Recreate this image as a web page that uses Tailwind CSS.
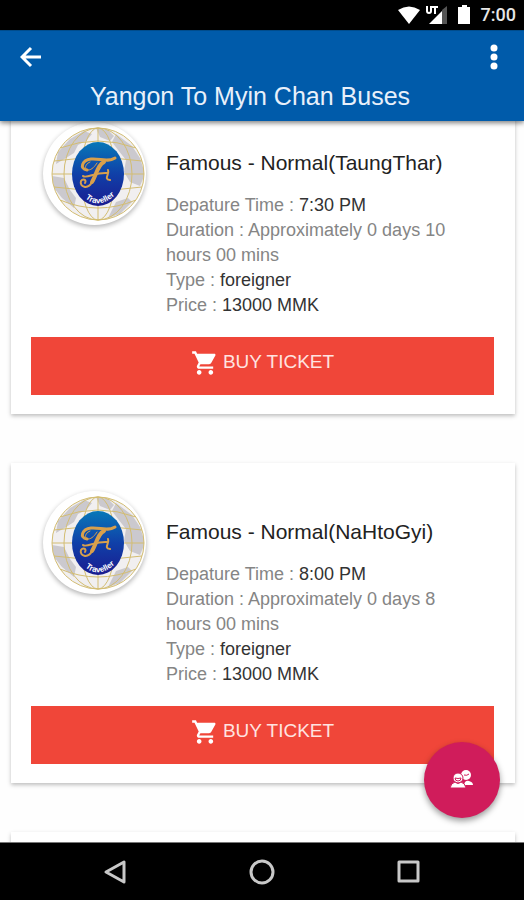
<!DOCTYPE html>
<html lang="en">
<head>
    <meta charset="UTF-8">
    <meta name="viewport" content="width=device-width, initial-scale=1.0">
    <script src="https://cdn.jsdelivr.net/npm/@tailwindcss/browser@4"></script>
    <title>Yangon To Myin Chan Buses</title>
</head>
<body class="flex flex-col h-screen overflow-hidden bg-white font-['Liberation_Sans',sans-serif]">

    <!-- Shared drawings -->
    <svg class="absolute w-0 h-0" aria-hidden="true">
        <defs>
            <linearGradient id="oval" x1="0" y1="0" x2="0" y2="1">
                <stop offset="0" stop-color="#0878b8" />
                <stop offset="0.5" stop-color="#1040a8" />
                <stop offset="1" stop-color="#1a1c90" />
            </linearGradient>
            <path id="arc" d="M31 68Q48 88 69 65" />
            <clipPath id="globe"><circle cx="48" cy="48" r="46" /></clipPath>
            <symbol id="logo" viewBox="0 0 96 96">
                <circle cx="48" cy="48" r="46" fill="#f1eff0" />
                <g clip-path="url(#globe)" fill="#cbc9ce">
                    <path d="M8 26L20 13L34 5L42 8L36 15L28 19L24 27L16 32L6 38Z" />
                    <path d="M46 2L58 4L64 10L60 15L50 11Z" />
                    <path d="M66 8L82 20L90 32L95 48L90 60L80 56L74 46L76 34L68 24L62 16Z" />
                    <path d="M2 50L14 52L20 64L26 72L24 82L12 72L4 62Z" />
                    <path d="M66 76L78 72L82 76L70 88L58 92Z" />
                </g>
                <g fill="none" stroke="#d3bd72" stroke-width="1">
                    <circle cx="48" cy="48" r="46" />
                    <ellipse cx="48" cy="48" rx="34" ry="46" />
                    <ellipse cx="48" cy="48" rx="17" ry="46" />
                    <path d="M48 2V94M2 48H94M10 22Q48 8 86 22M10 74Q48 90 86 74M4 35Q48 29 92 35M4 61Q48 67 92 61" />
                </g>
                <ellipse cx="48" cy="48" rx="26" ry="32" fill="url(#oval)" />
                <g fill="none" stroke="#d9a04c" stroke-linecap="round">
                    <path stroke-width="3" d="M37 44C29 43 32 34 41 33C50 32 57 37 65 32" />
                    <path stroke-width="4" d="M54 36C48 38 46 50 42 56" />
                    <path stroke-width="2" d="M42 56C38 64 29 61 31 55C33 52 37 54 35 57" />
                    <path stroke-width="2" d="M33 50C36 53 46 46 57 47M58 44C60 48 53 53 60 54" />
                    <path stroke-width="1" d="M40 36C35 38 34 43 38 44C42 44 45 40 47 37" />
                </g>
                <text class="font-['Liberation_Sans',sans-serif]" font-size="8" font-weight="bold" fill="#ffffff"><textPath href="#arc" startOffset="50%" text-anchor="middle">Traveller</textPath></text>
            </symbol>
            <symbol id="cart" viewBox="0 0 24 24">
                <path fill="currentColor" d="M7 18c-1.100 0-1.990.9-1.990 2S5.900 22 7 22s2-.9 2-2-.9-2-2-2zM1 2v2h2l3.600 7.590-1.350 2.450c-.16.280-.25.610-.25.960 0 1.100.9 2 2 2h12v-2H7.420c-.14 0-.25-.11-.25-.25l.03-.12.900-1.630h7.450c.75 0 1.410-.41 1.750-1.030l3.580-6.490c.08-.14.120-.31.120-.48 0-.55-.45-1-1-1H5.210l-.94-2H1zm16 16c-1.100 0-1.990.9-1.990 2s.89 2 1.990 2 2-.9 2-2-.9-2-2-2z" />
            </symbol>
        </defs>
    </svg>

    <!-- Status bar -->
    <div class="flex shrink-0 items-center justify-end h-[30px] px-2 bg-black text-white">
        <svg class="w-6 h-5" viewBox="0 0 24 20"><path fill="currentColor" d="M1 5Q12 -2 23 5L12 19Z" /></svg>
        <svg class="w-6 h-5 ml-1" viewBox="0 0 24 20">
            <path fill="#555555" d="M17 5L22 1V19H17Z" />
            <path fill="currentColor" d="M4 19L17 6V19Z" />
            <path fill="none" stroke="currentColor" stroke-width="2" d="M2 1V6Q2 8 4 8Q6 8 6 6V1M7 2H13M10 1V9" />
        </svg>
        <svg class="w-4 h-5 ml-2" viewBox="0 0 16 20"><path fill="currentColor" d="M5 0H10V2H13V19H1V2H5Z" /></svg>
        <span class="ml-2 font-['Roboto',sans-serif] text-[18px] leading-[30px] font-medium text-[#e6e6e6]">7:00</span>
    </div>

    <!-- Toolbar -->
    <header class="relative z-10 shrink-0 h-[91px] bg-[#005baa] text-white border-t border-[#004c8c] shadow-[0_2px_5px_rgba(0,0,0,0.5)]">
        <div class="flex items-center justify-between h-[52px] pl-5 pr-[22px]">
            <button type="button" aria-label="Back">
                <svg class="w-[22px] h-[22px]" viewBox="0 0 22 22" fill="none" stroke="currentColor" stroke-width="3"><path d="M21 11H3M11 2L2 11L11 20" /></svg>
            </button>
            <button type="button" aria-label="More options">
                <svg class="w-4 h-7" viewBox="0 0 16 28" fill="currentColor"><circle cx="8" cy="5" r="3.500" /><circle cx="8" cy="14" r="3.500" /><circle cx="8" cy="23" r="3.500" /></svg>
            </button>
        </div>
        <h1 class="pr-6 text-center text-[25px] leading-[26px] text-[#e8f0fa]">Yangon To Myin Chan Buses</h1>
    </header>

    <!-- Bus list -->
    <main class="relative flex-1 min-h-0 bg-[#fefefe]">
        <ul class="flex flex-col gap-[49px] h-full overflow-hidden pl-[11px] pr-[9px]">
            <li class="-mt-[27px] shrink-0 bg-white pl-5 pr-[21px] pt-[28px] pb-[19px] shadow-[0_2px_4px_rgba(0,0,0,0.25)]">
                <div class="flex gap-5 pl-3">
                    <div class="flex shrink-0 items-center justify-end size-[103px] rounded-full bg-white shadow-[0_2px_5px_rgba(0,0,0,0.3)]">
                        <svg class="size-24" role="img" aria-label="Famous Traveller"><use href="#logo" /></svg>
                    </div>
                    <div class="flex-1 pt-[27px] pr-5">
                        <h2 class="text-[21px] leading-[28px] text-[#222222]">Famous - Normal(TaungThar)</h2>
                        <div class="mt-4 text-[18px] leading-[25px] text-[#858585]">
                            <p>Depature Time : <span class="text-[#333333]">7:30 PM</span></p>
                            <p>Duration : Approximately 0 days 10 hours 00 mins</p>
                            <p>Type : <span class="text-[#333333]">foreigner</span></p>
                            <p>Price : <span class="text-[#333333]">13000 MMK</span></p>
                        </div>
                    </div>
                </div>
                <button type="button" class="flex justify-center w-full h-[58px] mt-[19px] pt-3 bg-[#f04639] text-white">
                    <svg class="w-7 h-7 mr-1"><use href="#cart" /></svg>
                    <span class="text-[19px] leading-[26px] text-[#ffe3e0]">BUY TICKET</span>
                </button>
            </li>
            <li class="shrink-0 bg-white pl-5 pr-[21px] pt-[28px] pb-[19px] shadow-[0_2px_4px_rgba(0,0,0,0.25)]">
                <div class="flex gap-5 pl-3">
                    <div class="flex shrink-0 items-center justify-end size-[103px] rounded-full bg-white shadow-[0_2px_5px_rgba(0,0,0,0.3)]">
                        <svg class="size-24" role="img" aria-label="Famous Traveller"><use href="#logo" /></svg>
                    </div>
                    <div class="flex-1 pt-[27px] pr-5">
                        <h2 class="text-[21px] leading-[28px] text-[#222222]">Famous - Normal(NaHtoGyi)</h2>
                        <div class="mt-4 text-[18px] leading-[25px] text-[#858585]">
                            <p>Depature Time : <span class="text-[#333333]">8:00 PM</span></p>
                            <p>Duration : Approximately 0 days 8 hours 00 mins</p>
                            <p>Type : <span class="text-[#333333]">foreigner</span></p>
                            <p>Price : <span class="text-[#333333]">13000 MMK</span></p>
                        </div>
                    </div>
                </div>
                <button type="button" class="flex justify-center w-full h-[58px] mt-[19px] pt-3 bg-[#f04639] text-white">
                    <svg class="w-7 h-7 mr-1"><use href="#cart" /></svg>
                    <span class="text-[19px] leading-[26px] text-[#ffe3e0]">BUY TICKET</span>
                </button>
            </li>
            <li class="shrink-0 h-80 bg-white shadow-[0_2px_4px_rgba(0,0,0,0.25)]"></li>
        </ul>
        <button type="button" aria-label="Passengers" class="absolute right-6 bottom-6 flex items-center justify-center size-19 rounded-full bg-[#d01c5b] text-white shadow-[0_3px_6px_rgba(0,0,0,0.4)]">
            <svg class="w-6 h-6" viewBox="0 0 24 24">
                <circle cx="16" cy="7" r="5" fill="currentColor" />
                <path fill="currentColor" d="M14 17Q15 12 19 13Q23 14 23 17Z" />
                <g fill="currentColor" stroke="#d01c5b" stroke-width="1"><circle cx="8" cy="10" r="5" /><path d="M0 20Q1 15 5 14Q8 17 11 14Q15 15 16 20Z" /></g>
                <path fill="none" stroke="#d01c5b" stroke-width="1" d="M5 10Q5 13 8 13Q11 13 11 10Q8 11 5 10M14 7Q17 8 19 6" />
            </svg>
        </button>
    </main>

    <!-- Navigation bar -->
    <nav class="flex items-center justify-between shrink-0 h-[58px] px-[103px] bg-black text-[#c8c8c8] border-t border-[#777777]">
        <button type="button" aria-label="Back">
            <svg class="w-6 h-7" viewBox="0 0 24 28" fill="none" stroke="currentColor" stroke-width="3" stroke-linejoin="round"><path d="M21 4V24L3 14Z" /></svg>
        </button>
        <button type="button" aria-label="Home">
            <svg class="w-7 h-7" viewBox="0 0 28 28" fill="none" stroke="currentColor" stroke-width="3"><circle cx="14" cy="14" r="11" /></svg>
        </button>
        <button type="button" aria-label="Recent apps">
            <svg class="w-6 h-7" viewBox="0 0 24 28" fill="none" stroke="currentColor" stroke-width="3" stroke-linejoin="round"><path d="M2 4H21V23H2Z" /></svg>
        </button>
    </nav>
</body>
</html>
